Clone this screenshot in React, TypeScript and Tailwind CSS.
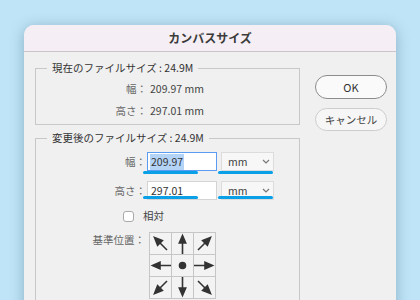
import React from "react"

const jp = "font-['Noto_Sans_CJK_JP',sans-serif]"

const Arrow = ({ dir }: { dir: string }) => {
  // one cell of the anchor grid
  const shapes: Record<string, React.ReactNode> = {
    n: (
      <>
        <line x1="10.5" y1="21" x2="10.5" y2="9" />
        <polygon points="10.5,2.5 7.3,10 13.7,10" />
      </>
    ),
    s: (
      <>
        <line x1="10.5" y1="0" x2="10.5" y2="12" />
        <polygon points="10.5,18.5 7.3,11 13.7,11" />
      </>
    ),
    w: (
      <>
        <line x1="21" y1="10.5" x2="9" y2="10.5" />
        <polygon points="2.5,10.5 10,7.3 10,13.7" />
      </>
    ),
    e: (
      <>
        <line x1="0" y1="10.5" x2="12" y2="10.5" />
        <polygon points="18.5,10.5 11,7.3 11,13.7" />
      </>
    ),
    nw: (
      <>
        <line x1="17" y1="17" x2="9" y2="9" />
        <polygon points="4.5,4.5 12.4,7.6 7.6,12.4" />
      </>
    ),
    ne: (
      <>
        <line x1="4" y1="17" x2="12" y2="9" />
        <polygon points="16.5,4.5 8.6,7.6 13.4,12.4" />
      </>
    ),
    sw: (
      <>
        <line x1="17" y1="4" x2="9" y2="12" />
        <polygon points="4.5,16.5 7.6,8.6 12.4,13.4" />
      </>
    ),
    se: (
      <>
        <line x1="4" y1="4" x2="12" y2="12" />
        <polygon points="16.5,16.5 8.6,13.4 13.4,8.6" />
      </>
    ),
    c: <circle cx="10.5" cy="10.5" r="3" />,
  }
  return (
    <div className="w-[21px] h-[21px] bg-[#f3f3f3]">
      <svg width="21" height="21" viewBox="0 0 21 21" fill="#333" stroke="#333" strokeWidth="1.6">
        {shapes[dir]}
      </svg>
    </div>
  )
}

const Chevron = () => (
  <svg width="8" height="5" viewBox="0 0 8 5" fill="none" stroke="#777" strokeWidth="1.2">
    <path d="M1 1l3 3 3-3" />
  </svg>
)

export default function App() {
  const dirs = ["nw", "n", "ne", "w", "c", "e", "sw", "s", "se"]
  return (
    <div className={`w-[420px] h-[300px] overflow-hidden bg-[#bfe4f7] pt-[25px] pl-[24px] ${jp}`}>
      <div className="w-[372px] h-[290px] rounded-t-[10px] bg-[#f0f0f0] shadow-[0_2px_14px_rgba(40,80,110,0.35)] overflow-hidden flex flex-col">
        <div className="h-[27px] shrink-0 bg-[#f5eef5] border-b border-[#c9c5c9] flex items-center justify-center text-[12px] font-bold text-[#3b3b3b]">
          カンバスサイズ
        </div>

        <div className="flex pl-[11px] pt-[8px] text-[10.5px] leading-[16px]">
          <div className="w-[265px] flex flex-col gap-[5px]">
            {/* current size */}
            <fieldset className="border border-[#c8c8c8]">
              <legend className="ml-[11px] px-[5px] text-[#333]">現在のファイルサイズ&nbsp;:&nbsp;24.9M</legend>
              <div className="pt-[5px] pb-[5px] flex flex-col gap-[6px]">
                <div className="flex">
                  <div className="w-[111px] text-right text-[#666]">幅：</div>
                  <div className="ml-[3px] text-[#444]">209.97 mm</div>
                </div>
                <div className="flex">
                  <div className="w-[111px] text-right text-[#666]">高さ：</div>
                  <div className="ml-[3px] text-[#444]">297.01 mm</div>
                </div>
              </div>
            </fieldset>

            {/* new size */}
            <fieldset className="border border-[#c8c8c8] h-[200px]">
              <legend className="ml-[11px] px-[5px] text-[#333]">変更後のファイルサイズ&nbsp;:&nbsp;24.9M</legend>
              <div className="pt-[6px] flex flex-col gap-[10px]">
                <div className="flex items-center">
                  <div className="w-[110px] text-right text-[#666]">幅：</div>
                  <div className="relative ml-[1px]">
                    <div className="w-[70px] h-[19px] bg-white border border-[#5a9cf2] flex items-center pl-[2px]">
                      <span className="bg-[#b3d3f7] text-[#333] px-px">209.97</span>
                    </div>
                    <div className="absolute left-[-4px] top-[19px] w-[55px] h-[3px] rounded-full bg-[#0aa0e8]" />
                  </div>
                  <div className="relative ml-[4px]">
                    <div className="w-[53px] h-[19px] bg-[#f7f7f7] border border-[#dcdcdc] flex items-center justify-between pl-[6px] pr-[3px] text-[#444]">
                      mm
                      <Chevron />
                    </div>
                    <div className="absolute left-[-3px] top-[19px] w-[55px] h-[3px] rounded-full bg-[#0aa0e8]" />
                  </div>
                </div>
                <div className="flex items-center">
                  <div className="w-[110px] text-right text-[#666]">高さ：</div>
                  <div className="relative ml-[1px]">
                    <div className="w-[70px] h-[19px] bg-white border border-[#d4d4d4] flex items-center pl-[3px] text-[#333]">
                      297.01
                    </div>
                    <div className="absolute left-[-4px] top-[15px] w-[55px] h-[3px] rounded-full bg-[#0aa0e8]" />
                  </div>
                  <div className="relative ml-[4px]">
                    <div className="w-[53px] h-[19px] bg-[#f7f7f7] border border-[#dcdcdc] flex items-center justify-between pl-[6px] pr-[3px] text-[#444]">
                      mm
                      <Chevron />
                    </div>
                    <div className="absolute left-[-3px] top-[15px] w-[55px] h-[3px] rounded-full bg-[#0aa0e8]" />
                  </div>
                </div>

                <div className="flex items-center mt-[-2px] pl-[87px]">
                  <div className="w-[11px] h-[11px] rounded-[3px] border border-[#a9a9a9] bg-white" />
                  <span className="ml-[9px] text-[#444]">相対</span>
                </div>

                <div className="flex items-start mt-[-2px]">
                  <div className="w-[109px] text-right text-[#666]">基準位置：</div>
                  <div className="ml-[4px] grid grid-cols-3 gap-px p-px bg-[#c6c6c6]">
                    {dirs.map((d) => (
                      <Arrow key={d} dir={d} />
                    ))}
                  </div>
                </div>
              </div>
            </fieldset>
          </div>

          <div className="ml-[15px] pt-[15px] flex flex-col gap-[9px] w-[72px]">
            <button className="h-[24px] rounded-full border border-[#8c8c8c] bg-[#fafafa] text-[#333] text-[11px]">
              OK
            </button>
            <button className="h-[23px] rounded-full border border-[#cdcdcd] bg-[#f6f6f6] text-[#444] text-[10.5px]">
              キャンセル
            </button>
          </div>
        </div>
      </div>
    </div>
  )
}
